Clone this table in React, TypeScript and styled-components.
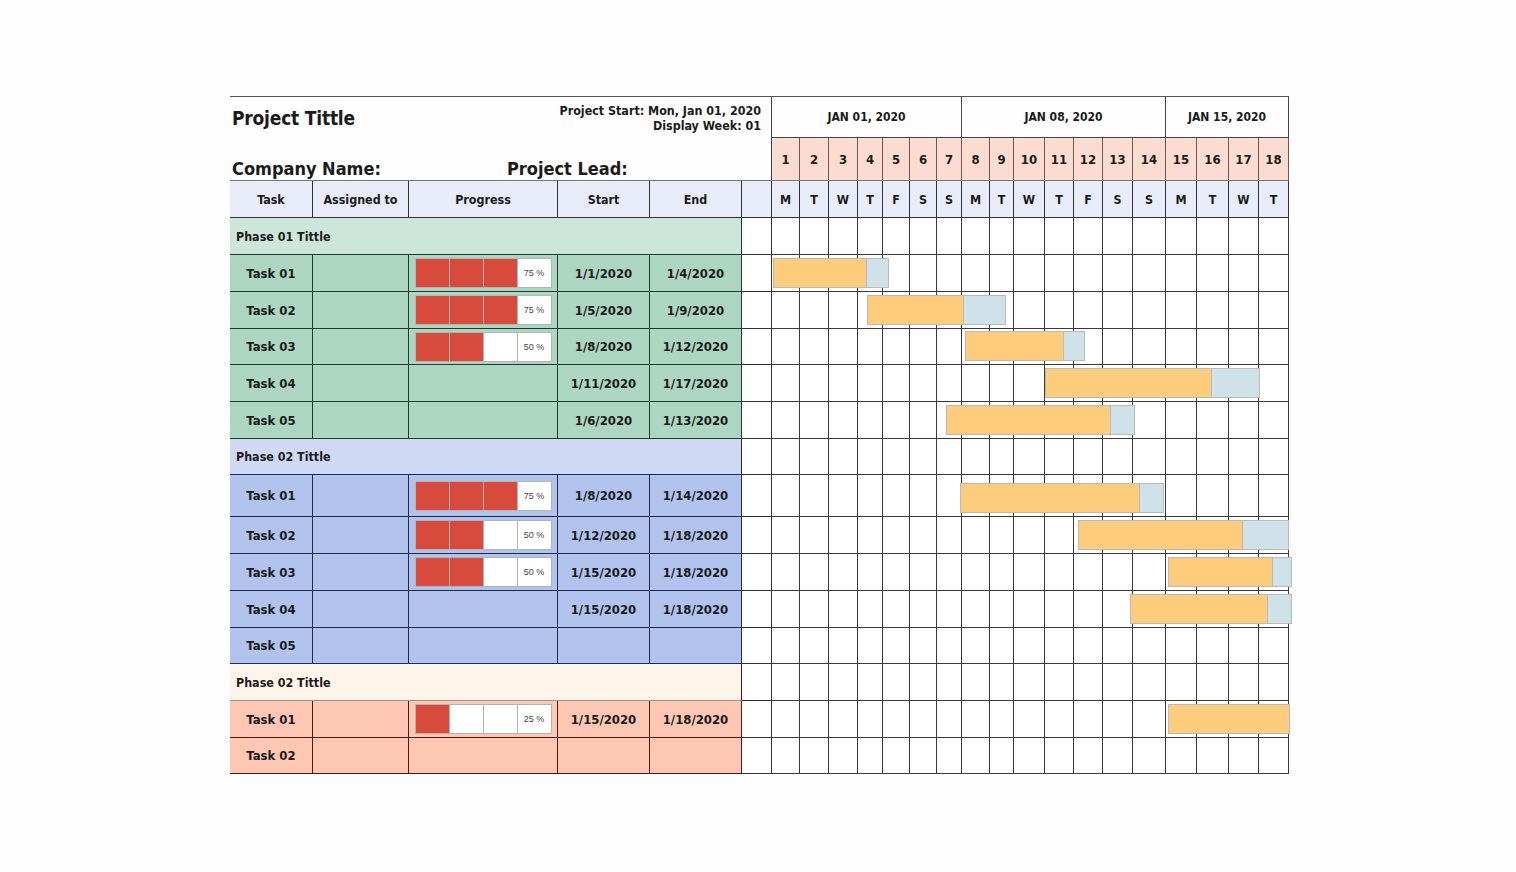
import { Fragment } from "react";
import styled, { createGlobalStyle } from "styled-components";

const LEFT_COLS = [83, 96, 149, 92, 92, 30];
const DAY_W = [28, 29, 29, 25, 27, 27, 25, 28, 24, 31, 29, 29, 30, 33, 31, 32, 30, 30];
const LETTERS = ["M", "T", "W", "T", "F", "S", "S", "M", "T", "W", "T", "F", "S", "S", "M", "T", "W", "T"];
const WEEKS = [
  { label: "JAN 01, 2020", from: 7, to: 14 },
  { label: "JAN 08, 2020", from: 14, to: 21 },
  { label: "JAN 15, 2020", from: 21, to: 25 },
];

const px = (list: number[]) => list.map((w) => `${w}px`).join(" ");

type Tone = "green" | "blue" | "salmon";

const tones: Record<Tone, { phase: string; task: string; line: string; phaseLine: string }> = {
  green: { phase: "#cde6da", task: "#acd5c2", line: "#1f3b2f", phaseLine: "#1f3b2f" },
  blue: { phase: "#d0d9f4", task: "#b1c3ec", line: "#1d2b50", phaseLine: "#1d2b50" },
  salmon: { phase: "#fff4ea", task: "#fdc7b3", line: "#4a1d12", phaseLine: "#9a9a9a" },
};

type Bar = { left: number; main: number; rest: number };
type Task = { name: string; h: number; progress?: number; start?: string; end?: string; bar?: Bar };
type Phase = { title: string; tone: Tone; h: number; tasks: Task[] };

const phases: Phase[] = [
  {
    title: "Phase 01 Tittle",
    tone: "green",
    h: 37,
    tasks: [
      { name: "Task 01", h: 37, progress: 75, start: "1/1/2020", end: "1/4/2020", bar: { left: 1, main: 92, rest: 21 } },
      { name: "Task 02", h: 37, progress: 75, start: "1/5/2020", end: "1/9/2020", bar: { left: 95, main: 95, rest: 41 } },
      { name: "Task 03", h: 36, progress: 50, start: "1/8/2020", end: "1/12/2020", bar: { left: 193, main: 97, rest: 20 } },
      { name: "Task 04", h: 37, start: "1/11/2020", end: "1/17/2020", bar: { left: 273, main: 165, rest: 47 } },
      { name: "Task 05", h: 37, start: "1/6/2020", end: "1/13/2020", bar: { left: 174, main: 163, rest: 23 } },
    ],
  },
  {
    title: "Phase 02 Tittle",
    tone: "blue",
    h: 36,
    tasks: [
      { name: "Task 01", h: 42, progress: 75, start: "1/8/2020", end: "1/14/2020", bar: { left: 188, main: 178, rest: 23 } },
      { name: "Task 02", h: 37, progress: 50, start: "1/12/2020", end: "1/18/2020", bar: { left: 306, main: 163, rest: 45 } },
      { name: "Task 03", h: 37, progress: 50, start: "1/15/2020", end: "1/18/2020", bar: { left: 396, main: 103, rest: 18 } },
      { name: "Task 04", h: 37, start: "1/15/2020", end: "1/18/2020", bar: { left: 358, main: 136, rest: 23 } },
      { name: "Task 05", h: 36 },
    ],
  },
  {
    title: "Phase 02 Tittle",
    tone: "salmon",
    h: 37,
    tasks: [
      { name: "Task 01", h: 37, progress: 25, start: "1/15/2020", end: "1/18/2020", bar: { left: 396, main: 120, rest: 0 } },
      { name: "Task 02", h: 36 },
    ],
  },
];

const GlobalStyle = createGlobalStyle`
  body {
    margin: 0;
    background: #fdfdfd;
    font-family: "DejaVu Sans", Verdana, sans-serif;
    font-stretch: condensed;
    color: #1b1b1b;
  }
`;

const Sheet = styled.div<{ $rows: string }>`
  display: grid;
  grid-template-columns: ${px(LEFT_COLS)} ${px(DAY_W)};
  grid-template-rows: ${(p) => p.$rows};
  width: 1059px;
  margin: 96px 0 0 230px;
  border-top: 1px solid #555;
  font-weight: bold;
`;

const TitleBlock = styled.div`
  grid-column: 1 / 7;
  grid-row: 1 / 3;
  display: flex;
  flex-direction: column;
  justify-content: space-between;
  padding: 6px 10px 0 2px;
  border-right: 1px solid #444;
  border-bottom: 1px solid #777;
`;

const TitleTop = styled.div`
  display: flex;
  justify-content: space-between;
  align-items: flex-start;
`;

const ProjectTitle = styled.h1`
  margin: 4px 0 0;
  font-size: 19px;
  letter-spacing: -0.2px;
`;

const Meta = styled.div`
  text-align: right;
  font-size: 12.4px;
  line-height: 15px;
`;

const TitleBottom = styled.div`
  display: grid;
  grid-template-columns: 275px 1fr;
  font-size: 18px;
  line-height: 22px;
`;

const WeekCell = styled.div<{ $from: number; $to: number }>`
  grid-column: ${(p) => `${p.$from} / ${p.$to}`};
  display: flex;
  align-items: center;
  justify-content: center;
  font-size: 12px;
  border-right: 1px solid #444;
  border-bottom: 1px solid #444;
`;

const DayNum = styled.div`
  display: flex;
  align-items: center;
  justify-content: center;
  background: #fcdcd0;
  font-size: 13px;
  border-right: 1px solid #6a5a55;
  border-bottom: 1px solid #777;
`;

const HeadCell = styled.div`
  display: flex;
  align-items: center;
  justify-content: center;
  background: #e8ebf8;
  font-size: 12.4px;
  border-right: 1px solid #333;
  border-bottom: 1px solid #333;
`;

const PhaseCell = styled.div<{ $tone: Tone }>`
  grid-column: 1 / 6;
  display: flex;
  align-items: center;
  padding-left: 6px;
  font-size: 12.4px;
  background: ${(p) => tones[p.$tone].phase};
  border-right: 1px solid ${(p) => tones[p.$tone].line};
  border-bottom: 1px solid ${(p) => tones[p.$tone].phaseLine};
`;

const TaskCell = styled.div<{ $tone: Tone }>`
  display: flex;
  align-items: center;
  justify-content: center;
  font-size: 13px;
  background: ${(p) => tones[p.$tone].task};
  border-right: 1px solid ${(p) => tones[p.$tone].line};
  border-bottom: 1px solid ${(p) => tones[p.$tone].line};
`;

const Spacer = styled.div`
  background: #fff;
  border-right: 1px solid #333;
  border-bottom: 1px solid #333;
`;

const Progress = styled.div`
  display: grid;
  grid-template-columns: repeat(4, 1fr);
  width: 137px;
  height: 30px;
  box-sizing: border-box;
  border: 1px solid #b4b4b4;
  background: #fff;
`;

const Segment = styled.div<{ $filled: boolean }>`
  display: flex;
  align-items: center;
  justify-content: center;
  background: ${(p) => (p.$filled ? "#d84a3c" : "#fff")};
  border-left: 1px solid #b4b4b4;
  font-family: "Liberation Sans", Arial, sans-serif;
  font-weight: normal;
  font-size: 9px;
  color: #444;

  &:first-child {
    border-left: none;
  }
`;

const GanttRow = styled.div`
  grid-column: 7 / -1;
  position: relative;
  display: grid;
  grid-template-columns: ${px(DAY_W)};
`;

const DayCell = styled.div`
  background: #fff;
  border-right: 1px solid #3a3a3a;
  border-bottom: 1px solid #3a3a3a;
`;

const BarBox = styled.div`
  position: absolute;
  display: flex;
  height: 30px;
  box-sizing: border-box;
  border: 1px solid #b9b9b9;
`;

const BarMain = styled.div`
  background: #fecc7d;
`;

const BarRest = styled.div`
  background: #cfe2e9;
  border-left: 1px solid #b9b9b9;
`;

const ProgressBar = ({ value }: { value: number }) => {
  const filled = Math.round(value / 25);
  return (
    <Progress>
      {[0, 1, 2, 3].map((i) => (
        <Segment key={i} $filled={i < filled && i < 3}>
          {i === 3 ? `${value} %` : null}
        </Segment>
      ))}
    </Progress>
  );
};

const Gantt = ({ h, bar }: { h: number; bar?: Bar }) => (
  <GanttRow>
    {DAY_W.map((_, i) => (
      <DayCell key={i} />
    ))}
    {bar && (
      <BarBox style={{ left: bar.left, top: h - 34 }}>
        <BarMain style={{ width: bar.main }} />
        {bar.rest > 0 && <BarRest style={{ width: bar.rest }} />}
      </BarBox>
    )}
  </GanttRow>
);

export default function App() {
  const rows = ["41px", "43px", "37px"];
  phases.forEach((p) => {
    rows.push(`${p.h}px`);
    p.tasks.forEach((t) => rows.push(`${t.h}px`));
  });

  return (
    <>
      <GlobalStyle />
      <Sheet $rows={rows.join(" ")}>
        <TitleBlock>
          <TitleTop>
            <ProjectTitle>Project Tittle</ProjectTitle>
            <Meta>
              Project Start: Mon, Jan 01, 2020
              <br />
              Display Week: 01
            </Meta>
          </TitleTop>
          <TitleBottom>
            <span>Company Name:</span>
            <span>Project Lead:</span>
          </TitleBottom>
        </TitleBlock>

        {WEEKS.map((w) => (
          <WeekCell key={w.label} $from={w.from} $to={w.to}>
            {w.label}
          </WeekCell>
        ))}

        {DAY_W.map((_, i) => (
          <DayNum key={i}>{i + 1}</DayNum>
        ))}

        <HeadCell>Task</HeadCell>
        <HeadCell>Assigned to</HeadCell>
        <HeadCell>Progress</HeadCell>
        <HeadCell>Start</HeadCell>
        <HeadCell>End</HeadCell>
        <HeadCell />
        {LETTERS.map((l, i) => (
          <HeadCell key={i}>{l}</HeadCell>
        ))}

        {phases.map((p, pi) => (
          <Fragment key={pi}>
            <PhaseCell $tone={p.tone}>{p.title}</PhaseCell>
            <Spacer />
            <Gantt h={p.h} />
            {p.tasks.map((t, ti) => (
              <Fragment key={ti}>
                <TaskCell $tone={p.tone}>{t.name}</TaskCell>
                <TaskCell $tone={p.tone} />
                <TaskCell $tone={p.tone}>
                  {t.progress !== undefined && <ProgressBar value={t.progress} />}
                </TaskCell>
                <TaskCell $tone={p.tone}>{t.start}</TaskCell>
                <TaskCell $tone={p.tone}>{t.end}</TaskCell>
                <Spacer />
                <Gantt h={t.h} bar={t.bar} />
              </Fragment>
            ))}
          </Fragment>
        ))}
      </Sheet>
    </>
  );
}
